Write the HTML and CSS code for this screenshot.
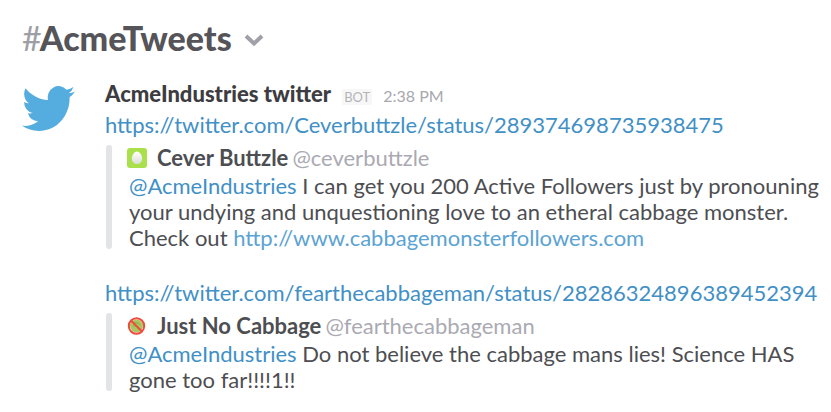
FILE: index.html
```
<!DOCTYPE html>
<html lang="en">
<head>
<meta charset="utf-8">
<meta name="viewport" content="width=device-width, initial-scale=1">
<title>#AcmeTweets</title>
<link rel="stylesheet" href="styles.css">
</head>
<body>
<header class="channel">
  <h1 class="channel-name"><span class="hash">#</span>AcmeTweets</h1>
  <button class="channel-menu" type="button" aria-label="Channel menu">
    <svg class="chevron" viewBox="0 0 20 14" aria-hidden="true"><path d="M2 3 10 10.500 18 3" fill="none" stroke="currentColor" stroke-width="4"/></svg>
  </button>
</header>
<main class="message">
  <svg class="avatar" viewBox="0 2.2 24 19.6" preserveAspectRatio="none" aria-hidden="true"><path fill="#55acde" d="M23.953 4.57a10 10 0 01-2.825.775 4.958 4.958 0 002.163-2.723c-.951.555-2.005.959-3.127 1.184a4.92 4.92 0 00-8.384 4.482C7.69 8.095 4.067 6.13 1.64 3.162a4.822 4.822 0 00-.666 2.475c0 1.71.87 3.213 2.188 4.096a4.904 4.904 0 01-2.228-.616v.06a4.923 4.923 0 003.946 4.827 4.996 4.996 0 01-2.212.085 4.936 4.936 0 004.604 3.417 9.867 9.867 0 01-6.102 2.105c-.39 0-.779-.023-1.17-.067a13.995 13.995 0 007.557 2.209c9.053 0 13.998-7.496 13.998-13.985 0-.21 0-.42-.015-.63A9.935 9.935 0 0024 4.59z"/></svg>
  <div class="content">
    <div class="meta">
      <span class="sender">AcmeIndustries twitter</span>
      <span class="bot">BOT</span>
      <time class="time">2:38 PM</time>
    </div>
    <section class="tweet">
      <a class="url" href="#">https://twitter.com/Ceverbuttzle/status/289374698735938475</a>
      <blockquote class="attachment">
        <div class="author">
          <svg class="author-icon" viewBox="0 0 22 22" aria-hidden="true">
            <defs><linearGradient id="egg" x1="0" y1="0" x2="0" y2="1"><stop offset="0" stop-color="#fff"/><stop offset="1" stop-color="#dcdedb"/></linearGradient></defs>
            <rect x="1" y="1" width="20" height="20" rx="3" fill="#a9e04b"/>
            <path d="M11 4.500c3 0 5.200 4 5.200 7.200a5.200 5.200 0 0 1-10.400 0c0-3.200 2.200-7.200 5.200-7.200z" fill="url(#egg)"/>
          </svg>
          <span class="author-name">Cever Buttzle</span>
          <span class="handle">@ceverbuttzle</span>
        </div>
        <p class="text"><a href="#">@AcmeIndustries</a> I can get you 200 Active Followers just by pronouning your undying and unquestioning love to an etheral cabbage monster. Check out <a class="outside" href="#">http://www.cabbagemonsterfollowers.com</a></p>
      </blockquote>
    </section>
    <section class="tweet">
      <a class="url" href="#">https://twitter.com/fearthecabbageman/status/28286324896389452394</a>
      <blockquote class="attachment">
        <div class="author">
          <svg class="author-icon" viewBox="0 0 22 22" aria-hidden="true">
            <circle cx="10.500" cy="11" r="6.500" fill="#a9c763"/>
            <path d="M7.500 8.500c2.500-1.500 5-1 6.500 1.500M7 11c3-1 4.500 1 5.500 3.500" fill="none" stroke="#86a548"/>
            <circle cx="10.500" cy="11" r="7.700" fill="none" stroke="#ee4b3c" stroke-width="2"/>
            <path d="M5.200 5.700l10.600 10.600" stroke="#ee4b3c" stroke-width="2"/>
          </svg>
          <span class="author-name">Just No Cabbage</span>
          <span class="handle">@fearthecabbageman</span>
        </div>
        <p class="text"><a href="#">@AcmeIndustries</a> Do not believe the cabbage mans lies! Science HAS gone too far!!!!1!!</p>
      </blockquote>
    </section>
  </div>
</main>
</body>
</html>
```

FILE: styles.css
```
* { box-sizing: border-box; }

body {
  margin: 0;
  padding: 19px 4px 16px 22px;
  background: #fff;
  color: #4d4e52;
  font: 22px/26px Lato, "Liberation Sans", sans-serif;
}

a { color: #4190c6; text-decoration: none; }

.channel { display: flex; align-items: center; gap: 12px; }

.channel-name { margin: 0; color: #555459; font-size: 34px; line-height: 38px; font-weight: 900; }

.hash { margin-right: -2px; color: #9e9ea6; font-weight: 400; }

.channel-menu { display: flex; padding: 4px 0 0; border: 0; background: none; color: #a0a0a8; }

.chevron { width: 20px; height: 14px; }

.message { display: flex; align-items: flex-start; gap: 30px; padding-top: 24px; }

.avatar { flex: none; width: 53px; height: 45px; margin-top: 5px; }

.content { flex: 1; min-width: 0; }

.meta { display: flex; align-items: baseline; gap: 11px; line-height: 26px; }

.sender { color: #3d3c40; font-weight: 900; }

.bot { padding: 0 2px; background: #f7f7f7; color: #b4b4b8; font-size: 13px; line-height: 16px; }

.time { color: #a8a8ae; font-size: 16px; }

.tweet + .tweet { margin-top: 26px; }

.url { display: block; line-height: 32px; }

.attachment { position: relative; margin: 4px 0 0; padding-left: 24px; }

.attachment::before {
  content: "";
  position: absolute;
  inset: 0 auto 2px 1px;
  width: 6px;
  border-radius: 3px;
  background: #e3e4e6;
}

.author { display: flex; align-items: center; gap: 4px; margin: 0 0 2px -3px; }

.author-icon { flex: none; width: 22px; height: 22px; margin-right: 5px; }

.author-name { font-weight: 700; }

.handle { color: #aaaab2; }

.text { margin: 0; }

.outside { color: #5ba3d2; }
```
